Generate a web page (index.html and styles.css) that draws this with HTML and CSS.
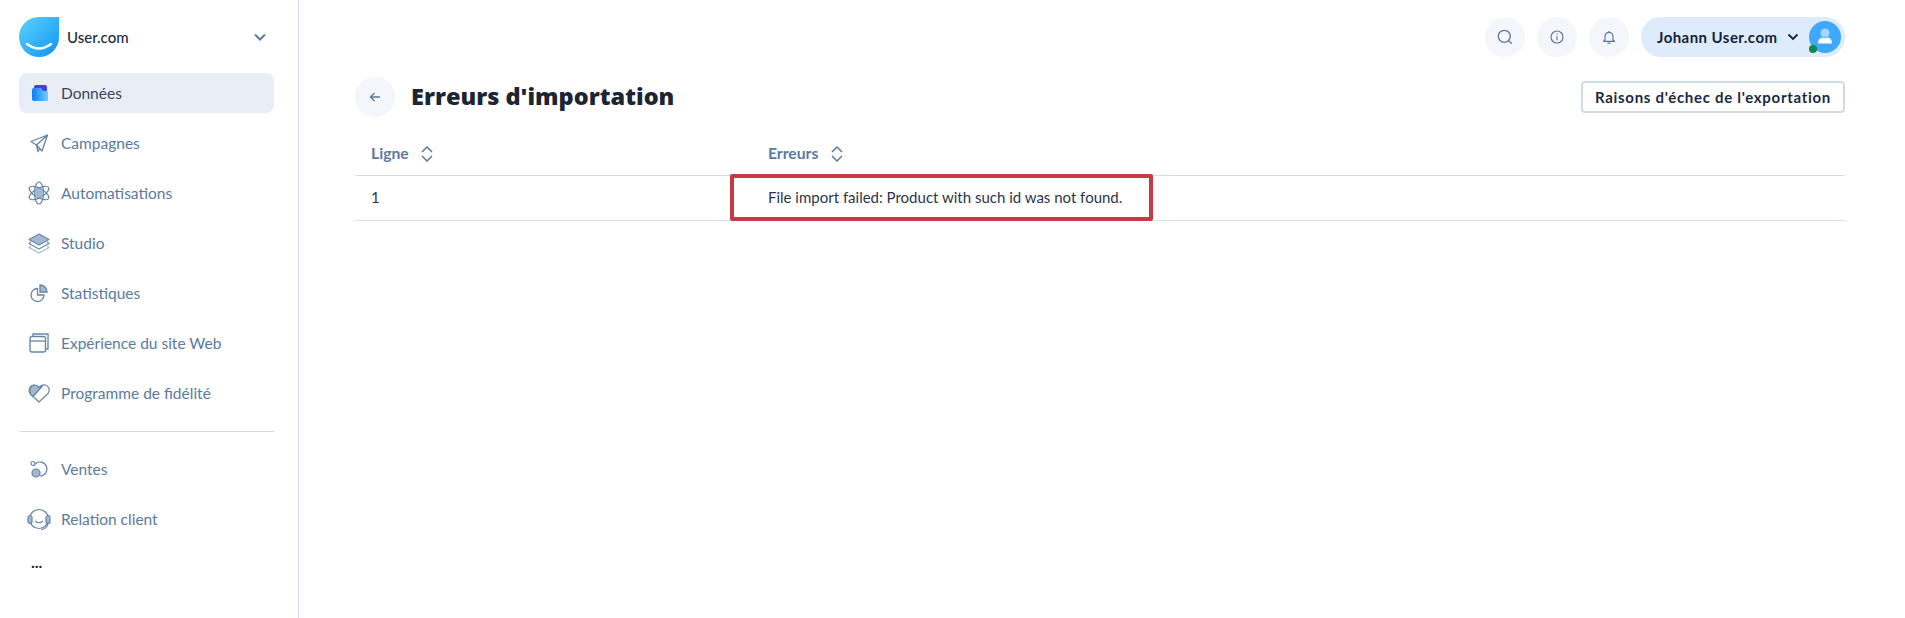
FILE: index.html
```html
<!DOCTYPE html>
<html lang="fr">
<head>
    <meta charset="UTF-8">
    <title>Erreurs d'importation</title>
    <link rel="stylesheet" href="styles.css">
</head>
<body>
    <aside class="sidebar">
        <div class="brand">
            <svg class="brand-logo" width="40" height="40" viewBox="0 0 40 40">
                <defs>
                    <linearGradient id="drop" x1="0" y1="0" x2="1" y2="1">
                        <stop offset="0" stop-color="#5cd3fb"/>
                        <stop offset="1" stop-color="#0f93f5"/>
                    </linearGradient>
                </defs>
                <path d="M40 0V20A20 20 0 1 1 20 0Z" fill="url(#drop)"/>
                <path d="M8 27Q20 36 32 27" fill="none" stroke="#fff" stroke-width="2.4" stroke-linecap="round"/>
            </svg>
            <span class="brand-name">User.com</span>
            <svg class="brand-caret" width="14" height="14" viewBox="0 0 14 14"><path d="M2 4.500L7 9.500L12 4.500" fill="none" stroke="#5b7a9d" stroke-width="2"/></svg>
        </div>

        <nav class="menu">
            <a class="menu-item active">
                <svg width="24" height="24" viewBox="0 0 24 24">
                    <defs>
                        <linearGradient id="folder" x1="0" y1="0" x2="1" y2="0">
                            <stop offset="0" stop-color="#1478f5"/>
                            <stop offset="1" stop-color="#6cd4f8"/>
                        </linearGradient>
                    </defs>
                    <path d="M7 5.500Q7 4 9 4H18Q20 4 20 6V10H7Z" fill="#4a3fe0"/>
                    <path d="M5 9Q5 7 7 7H14L16 10H20Q21 10 21 11V20H7Q5 20 5 18Z" fill="url(#folder)"/>
                </svg>
                Données
            </a>
            <a class="menu-item">
                <svg width="24" height="24" viewBox="0 0 24 24" fill="none" stroke="#6485a8" stroke-width="1.300" stroke-linejoin="round">
                    <path d="M20.500 4L4 10.500L9.500 14L20.500 4L15 20L9.500 14L11 20.500L13 17"/>
                </svg>
                Campagnes
            </a>
            <a class="menu-item">
                <svg width="24" height="24" viewBox="0 0 24 24" fill="none" stroke="#6485a8" stroke-width="1.200">
                    <ellipse cx="12" cy="12" rx="4.500" ry="11"/>
                    <ellipse cx="12" cy="12" rx="4.500" ry="11" transform="rotate(60 12 12)"/>
                    <ellipse cx="12" cy="12" rx="4.500" ry="11" transform="rotate(120 12 12)"/>
                    <circle cx="12" cy="12" r="4.500" fill="#a3b8cf" stroke="none"/>
                </svg>
                Automatisations
            </a>
            <a class="menu-item">
                <svg width="24" height="24" viewBox="0 0 24 24" fill="none" stroke="#6485a8" stroke-width="1.100" stroke-linejoin="round">
                    <path d="M12 3L22 8.500L12 14L2 8.500Z" fill="#a3b8cf"/>
                    <path d="M4 11L2 12.500L12 18L22 12.500L20 11"/>
                    <path d="M4 15.500L2 16.500L12 22L22 16.500L20 15.500" stroke="#a3b8cf"/>
                </svg>
                Studio
            </a>
            <a class="menu-item">
                <svg width="24" height="24" viewBox="0 0 24 24" fill="none" stroke="#6485a8" stroke-width="1.300">
                    <path d="M10.500 7.500A6.500 6.500 0 1 0 17 14H10.500Z"/>
                    <path d="M13 4A7 7 0 0 1 20 11H13Z" fill="#a3b8cf"/>
                </svg>
                Statistiques
            </a>
            <a class="menu-item">
                <svg width="24" height="24" viewBox="0 0 24 24" fill="none" stroke="#6485a8" stroke-width="1.300">
                    <path d="M6 5.500V3H21V18H18.500"/>
                    <rect x="3" y="5.500" width="15.500" height="15.500" rx="2"/>
                    <path d="M3 10H18.500"/>
                </svg>
                Expérience du site Web
            </a>
            <a class="menu-item">
                <svg width="24" height="24" viewBox="0 0 24 24" fill="none" stroke="#6485a8" stroke-width="1.200" stroke-linejoin="round">
                    <path d="M12 21L3 12.500C0.500 8.500 3.500 4 7 4C9 4 11 5 12 6.500C13.500 4.500 15.500 3.500 18 4C22 5 23.500 9 21 12.500Z"/>
                    <path d="M3.500 13C1.500 8.500 4 4.300 7 4C9 4 11 5 12 6.500L15.500 5L6 15.500Z" fill="#a3b8cf"/>
                </svg>
                Programme de fidélité
            </a>
        </nav>

        <hr class="menu-sep">

        <nav class="menu">
            <a class="menu-item">
                <svg width="24" height="24" viewBox="0 0 24 24" fill="none" stroke="#6485a8" stroke-width="1.200">
                    <circle cx="6" cy="6.500" r="2"/>
                    <circle cx="9" cy="16" r="4" fill="#a3b8cf"/>
                    <path d="M8 7A7 7 0 1 1 13 19"/>
                </svg>
                Ventes
            </a>
            <a class="menu-item">
                <svg width="24" height="24" viewBox="0 0 24 24" fill="none" stroke="#6485a8" stroke-width="1.200">
                    <circle cx="12" cy="12" r="9.500"/>
                    <rect x="1" y="8.500" width="4" height="8" rx="2" fill="#a3b8cf"/>
                    <rect x="19" y="8.500" width="4" height="8" rx="2" fill="#a3b8cf"/>
                    <path d="M8 14Q12 17.500 16 14"/>
                    <path d="M21 16.500Q20 22 14 22.500"/>
                </svg>
                Relation client
            </a>
        </nav>

        <div class="menu-more">...</div>
    </aside>

    <main class="content">
        <header class="topbar">
            <button class="round-btn">
                <svg width="16" height="16" viewBox="0 0 16 16" fill="none" stroke="#5b7a9d" stroke-width="1.300"><circle cx="7.300" cy="7.300" r="6"/><path d="M11.800 11.800L14.800 14.800"/></svg>
            </button>
            <button class="round-btn">
                <svg width="14" height="14" viewBox="0 0 14 14" fill="none" stroke="#5b7a9d" stroke-width="1.200"><circle cx="7" cy="7" r="6"/><path d="M7 6.200V10.200M7 3.600V4.800"/></svg>
            </button>
            <button class="round-btn">
                <svg width="14" height="14" viewBox="0 0 14 14" fill="none" stroke="#5b7a9d" stroke-width="1.200"><path d="M3 10V6.300A4 4 0 0 1 11 6.300V10L12.500 11.300H1.500Z" stroke-linejoin="round"/><path d="M5.500 13.200H8.500M7 1V2.300"/></svg>
            </button>
            <div class="user-pill">
                <span class="user-name">Johann User.com</span>
                <svg class="user-caret" width="12" height="12" viewBox="0 0 12 12"><path d="M1.500 3.500L6 8L10.500 3.500" fill="none" stroke="#14233c" stroke-width="1.800"/></svg>
                <span class="avatar">
                    <svg width="32" height="32" viewBox="0 0 32 32">
                        <circle cx="16" cy="12" r="4.500" fill="#a6d6fe"/>
                        <path d="M9 22.500Q9 17.500 13 16.500Q16 18 19 16.500Q23 17.500 23 22.500Z" fill="#fff"/>
                    </svg>
                    <span class="status-dot"></span>
                </span>
            </div>
        </header>

        <div class="page-head">
            <button class="round-btn">
                <svg width="12" height="12" viewBox="0 0 12 12" fill="none" stroke="#5b7a9d" stroke-width="1.400"><path d="M11 6H2M5.500 2L1.500 6L5.500 10"/></svg>
            </button>
            <h1>Erreurs d'importation</h1>
            <button class="btn-outline">Raisons d'échec de l'exportation</button>
        </div>

        <table class="errors">
            <thead>
                <tr>
                    <th class="col-line">Ligne <svg class="sort" width="12" height="16" viewBox="0 0 12 16"><path d="M1 6L6 1L11 6M1 10L6 15L11 10" fill="none" stroke="#5b7a9d" stroke-width="1.500"/></svg></th>
                    <th>Erreurs <svg class="sort" width="12" height="16" viewBox="0 0 12 16"><path d="M1 6L6 1L11 6M1 10L6 15L11 10" fill="none" stroke="#5b7a9d" stroke-width="1.500"/></svg></th>
                </tr>
            </thead>
            <tbody>
                <tr>
                    <td>1</td>
                    <td class="cell-error">File import failed: Product with such id was not found.<span class="highlight"></span></td>
                </tr>
            </tbody>
        </table>
    </main>
</body>
</html>
```

FILE: styles.css
```css
* {
    box-sizing: border-box;
}

html, body {
    height: 100%;
}

body {
    margin: 0;
    display: flex;
    height: 618px;
    overflow: hidden;
    background: #fff;
    font-family: 'Lato', 'Liberation Sans', sans-serif;
    color: #1c2a3f;
}

/* Menu lateral */
.sidebar {
    width: 299px;
    flex: none;
    padding: 17px 24px 0 19px;
    border-right: 1px solid #d3deea;
}

.brand {
    display: flex;
    align-items: center;
    height: 40px;
}

.brand-logo {
    flex: none;
}

.brand-name {
    margin-left: 8px;
    font-size: 15px;
    font-weight: 500;
    color: #1c2a3f;
}

.brand-caret {
    margin-left: auto;
    margin-right: 7px;
}

.menu {
    display: flex;
    flex-direction: column;
    gap: 10px;
}

.brand + .menu {
    margin-top: 16px;
}

.menu-item {
    display: flex;
    align-items: center;
    gap: 10px;
    height: 40px;
    padding-left: 8px;
    border-radius: 8px;
    font-size: 15.5px;
    color: #5b7a9d;
}

.menu-item svg {
    flex: none;
    width: 24px;
    height: 24px;
}

.menu-item.active {
    background: #e9edf5;
    color: #3a4658;
}

.menu-sep {
    margin: 18px 0 17px;
    border: 0;
    border-top: 1px solid #d3deea;
}

.menu-more {
    margin: 15px 0 0 12px;
    font-size: 16px;
    font-weight: 700;
    line-height: 16px;
    color: #14233c;
}

/* Conteudo */
.content {
    flex: 1;
    padding: 17px 60px 0 56px;
}

.topbar {
    display: flex;
    justify-content: flex-end;
    gap: 12px;
}

.round-btn {
    display: flex;
    align-items: center;
    justify-content: center;
    flex: none;
    width: 40px;
    height: 40px;
    padding: 0;
    border: 0;
    border-radius: 50%;
    background: #f4f6fb;
}

.user-pill {
    display: flex;
    align-items: center;
    width: 204px;
    height: 40px;
    padding: 0 4px 0 16px;
    border-radius: 20px;
    background: #deebfb;
}

.user-name {
    font-size: 15px;
    font-weight: 700;
    letter-spacing: 0.45px;
    color: #14233c;
    white-space: nowrap;
}

.user-caret {
    margin-left: auto;
    margin-right: 10px;
}

.avatar {
    position: relative;
    width: 32px;
    height: 32px;
    flex: none;
    border-radius: 50%;
    background: #3ea8fd;
}

.avatar svg {
    display: block;
}

.status-dot {
    position: absolute;
    left: 0;
    bottom: 0;
    width: 8px;
    height: 8px;
    border-radius: 50%;
    background: #12874f;
}

.page-head {
    display: flex;
    align-items: center;
    height: 40px;
    margin-top: 20px;
}

.page-head h1 {
    margin: 0 0 3px 16px;
    font-family: 'Open Sans', 'Liberation Sans', sans-serif;
    font-size: 23.5px;
    font-weight: 800;
    color: #1c2533;
}

.btn-outline {
    margin-left: auto;
    width: 264px;
    height: 32px;
    padding: 0;
    border: 2px solid #d0dbe8;
    border-radius: 4px;
    background: #fff;
    font-family: inherit;
    font-size: 15px;
    font-weight: 700;
    letter-spacing: 0.7px;
    color: #1c2a3f;
}

/* Tabela */
.errors {
    width: 100%;
    margin-top: 14px;
    border-collapse: collapse;
    font-size: 15px;
}

.errors th {
    height: 44px;
    padding: 0 16px;
    text-align: left;
    font-size: 15.7px;
    font-weight: 700;
    color: #5b7a9d;
    border-bottom: 1px solid #d3deea;
}

.errors .col-line {
    width: 397px;
}

.sort {
    margin-left: 9px;
    vertical-align: -3px;
}

.errors td {
    height: 45px;
    padding: 0 16px 2px;
    color: #2b3648;
    border-bottom: 1px solid #d3deea;
}

.cell-error {
    position: relative;
}

.highlight {
    position: absolute;
    left: -22px;
    top: -2px;
    width: 423px;
    height: 47px;
    border: 4px solid #c63a46;
    border-radius: 2px;
}
```
